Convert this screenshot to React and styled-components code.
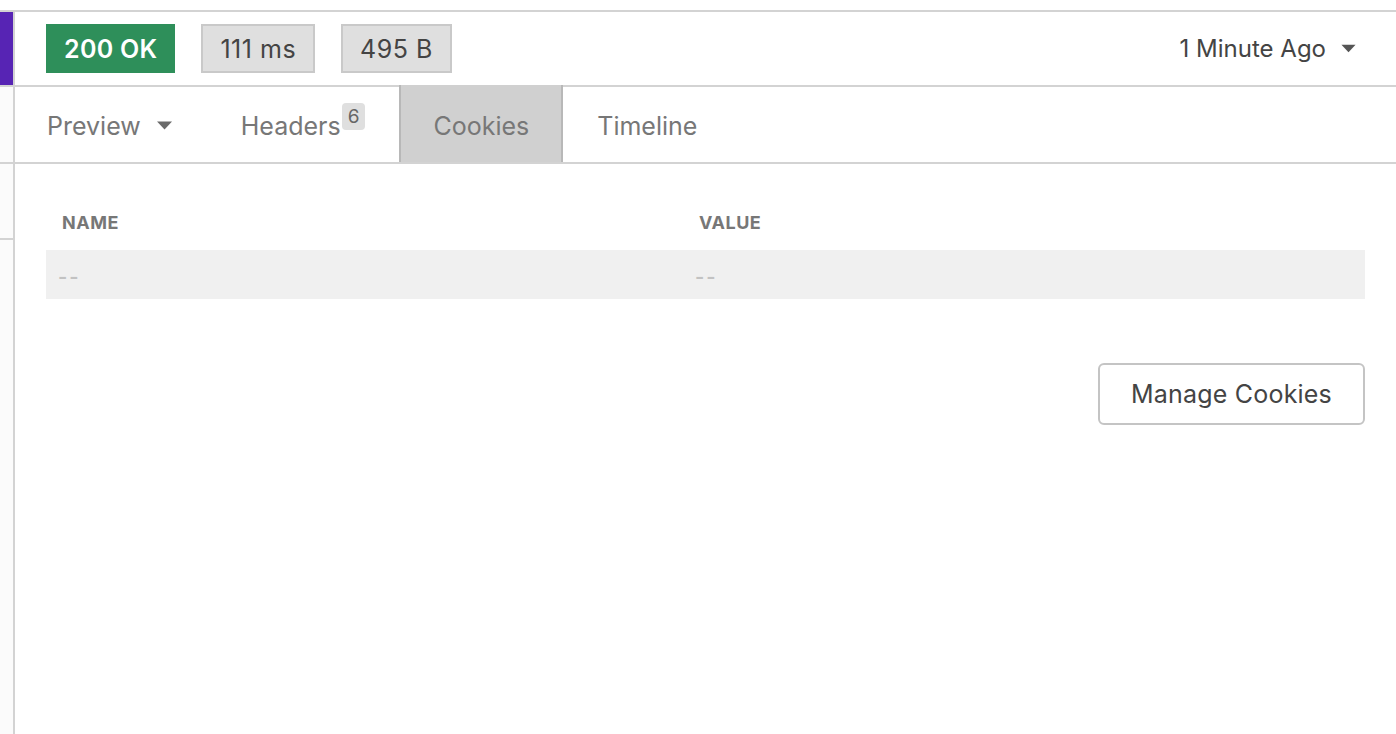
import styled, { createGlobalStyle } from "styled-components";

const GlobalStyle = createGlobalStyle`
  html, body {
    margin: 0;
    padding: 0;
    background: #ffffff;
  }
  body {
    font-family: Inter, "Noto Sans", "Liberation Sans", sans-serif;
    -webkit-font-smoothing: antialiased;
  }
  * {
    box-sizing: border-box;
  }
`;

const color = {
  line: "#d3d3d3",
  purple: "#5724b4",
  green: "#2e8f5a",
  chip: "#dfdfdf",
  chipBorder: "#c9c9c9",
  text: "#444444",
  muted: "#777777",
  faint: "#c2c2c2",
  row: "#f0f0f0",
  activeTab: "#d0d0d0",
  activeBorder: "#b8b8b8",
};

function Caret({ w = 16, h = 9, fill = "#555" }) {
  return (
    <svg width={w} height={h} viewBox="0 0 16 9">
      <path d="M0.5 0.5 L15.5 0.5 L8 8.5 Z" fill={fill} />
    </svg>
  );
}

const cookies = [{ name: "--", value: "--" }];

function App() {
  return (
    <>
      <GlobalStyle />
      <Window>
        <Frame>
          <SideStrip>
            <Accent />
            <StripCell />
            <StripCell $last />
          </SideStrip>
          <Pane>
            <StatusBar>
              <StatusBadge>200 OK</StatusBadge>
              <MetaChip>111 ms</MetaChip>
              <MetaChip>495 B</MetaChip>
              <History>
                1 Minute Ago
                <Caret w={15} h={9} fill="#555" />
              </History>
            </StatusBar>
            <Tabs>
              <Tab>
                Preview
                <Caret w={17} h={9} fill="#6a6a6a" />
              </Tab>
              <Tab>
                Headers
                <Count>6</Count>
              </Tab>
              <Tab $active>Cookies</Tab>
              <Tab>Timeline</Tab>
            </Tabs>
            <Content>
              <Table>
                <HeadCell>Name</HeadCell>
                <HeadCell>Value</HeadCell>
                {cookies.map((c, i) => (
                  <Row key={i}>
                    <Cell>{c.name}</Cell>
                    <Cell>{c.value}</Cell>
                  </Row>
                ))}
              </Table>
              <Actions>
                <ManageButton>Manage Cookies</ManageButton>
              </Actions>
            </Content>
          </Pane>
        </Frame>
      </Window>
    </>
  );
}
export default App;

const Window = styled.div`
  height: 734px;
  padding-top: 10px;
  display: flex;
  flex-direction: column;
  overflow: hidden;
`;

const Frame = styled.div`
  flex: 1;
  display: flex;
  border-top: 2px solid ${color.line};
`;

const SideStrip = styled.div`
  width: 15px;
  flex-shrink: 0;
  display: flex;
  flex-direction: column;
  background: #fbfbfb;
  border-right: 2px solid ${color.line};
`;

const Accent = styled.div`
  height: 73px;
  background: ${color.purple};
`;

const StripCell = styled.div`
  height: ${(p) => (p.$last ? "78px" : "77px")};
  border-top: 2px solid ${color.line};
  border-bottom: ${(p) => (p.$last ? `2px solid ${color.line}` : "none")};
`;

const Pane = styled.div`
  flex: 1;
  display: flex;
  flex-direction: column;
  min-width: 0;
`;

const StatusBar = styled.div`
  height: 75px;
  display: flex;
  align-items: center;
  gap: 26px;
  padding: 0 40px 0 31px;
  border-bottom: 2px solid ${color.line};
`;

const StatusBadge = styled.div`
  height: 49px;
  padding: 0 18px;
  display: flex;
  align-items: center;
  background: ${color.green};
  color: #ffffff;
  font-size: 25px;
  font-weight: 600;
  letter-spacing: 0.3px;
`;

const MetaChip = styled.div`
  height: 49px;
  padding: 0 17px;
  display: flex;
  align-items: center;
  background: ${color.chip};
  border: 2px solid ${color.chipBorder};
  color: ${color.text};
  font-size: 25px;
  letter-spacing: 0.5px;
`;

const History = styled.div`
  margin-left: auto;
  display: flex;
  align-items: center;
  gap: 15px;
  color: ${color.text};
  font-size: 24px;
`;

const Tabs = styled.div`
  height: 77px;
  display: flex;
  border-bottom: 2px solid ${color.line};
`;

const Tab = styled.div`
  display: flex;
  align-items: center;
  gap: 15px;
  padding: 4px 32px 0;
  margin-top: -2px;
  border-left: 2px solid ${(p) => (p.$active ? color.activeBorder : "transparent")};
  border-right: 2px solid ${(p) => (p.$active ? color.activeBorder : "transparent")};
  background: ${(p) => (p.$active ? color.activeTab : "transparent")};
  color: ${color.muted};
  font-size: 25px;
  &:first-child {
    padding-left: 30px;
  }
`;

const Count = styled.span`
  position: relative;
  top: -9px;
  margin-left: -14px;
  padding: 0 6px;
  border-radius: 4px;
  background: ${color.chip};
  color: #666;
  font-size: 19px;
  line-height: 27px;
`;

const Content = styled.div`
  padding: 42px 31px 0;
  display: flex;
  flex-direction: column;
`;

const Table = styled.div`
  display: grid;
  grid-template-columns: 637px 1fr;
`;

const HeadCell = styled.div`
  height: 44px;
  padding: 0 16px 12px;
  display: flex;
  align-items: center;
  color: ${color.muted};
  font-size: 18px;
  font-weight: 700;
  letter-spacing: 0.5px;
  text-transform: uppercase;
`;

const Row = styled.div`
  display: contents;
`;

const Cell = styled.div`
  height: 49px;
  padding: 4px 12px 0;
  display: flex;
  align-items: center;
  background: ${color.row};
  color: ${color.faint};
  font-size: 20px;
  font-weight: 600;
  letter-spacing: 2px;
`;

const Actions = styled.div`
  display: flex;
  justify-content: flex-end;
  margin-top: 64px;
`;

const ManageButton = styled.button`
  width: 267px;
  height: 62px;
  border: 2px solid #c4c4c4;
  border-radius: 6px;
  background: #ffffff;
  color: ${color.text};
  font-family: inherit;
  font-size: 25px;
  letter-spacing: 0.2px;
  cursor: pointer;
`;
